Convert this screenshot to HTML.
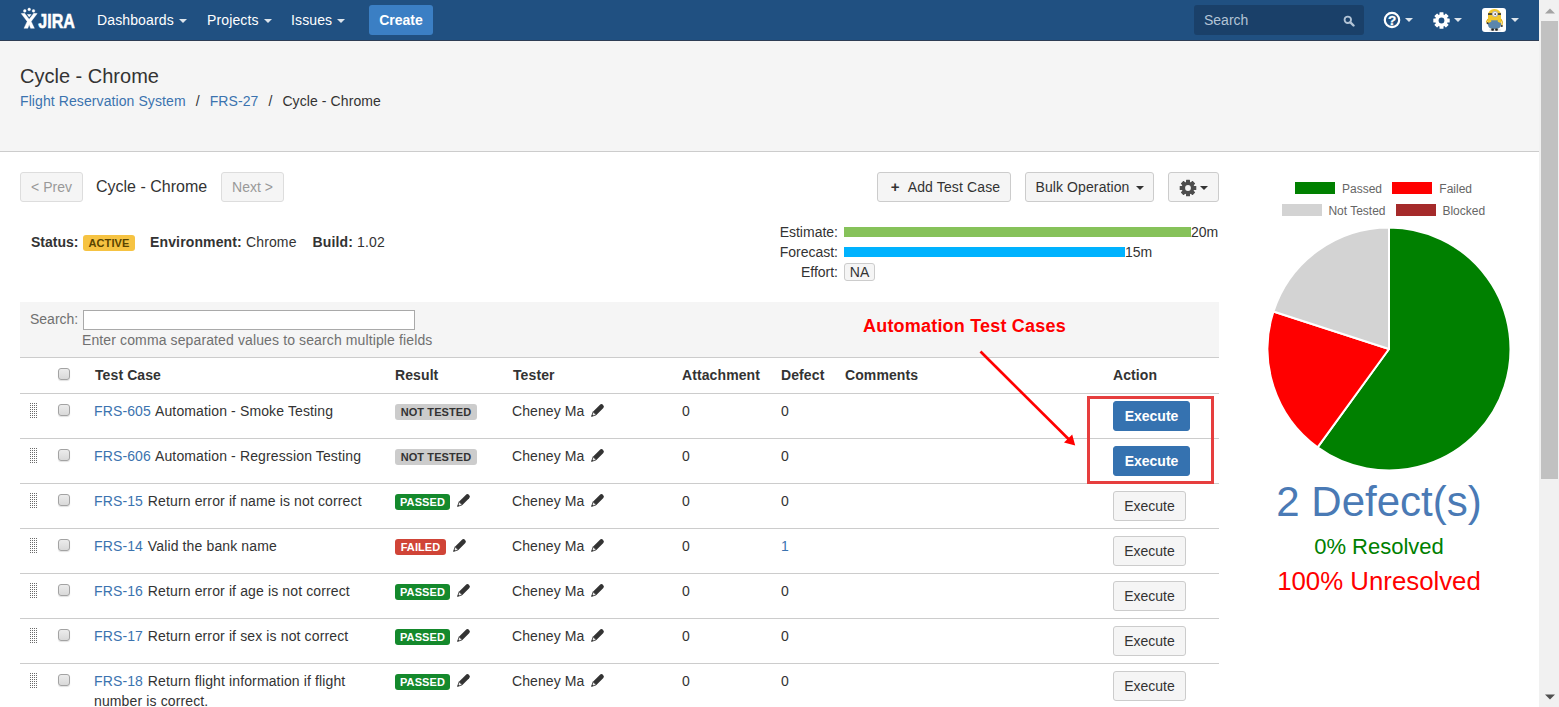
<!DOCTYPE html>
<html><head><meta charset="utf-8">
<style>
*{box-sizing:border-box;margin:0;padding:0}
html,body{width:1559px;height:707px;overflow:hidden;background:#fff}
body{font-family:"Liberation Sans",Arial,sans-serif;font-size:14px;color:#333;position:relative}
.abs{position:absolute;white-space:nowrap}
a{color:#3b73af;text-decoration:none}
#hdr{position:absolute;left:0;top:0;width:1539px;height:41px;background:#205081;border-bottom:1px solid #2e3d54}
#hdr .nav{position:absolute;top:12px;color:#fff;font-size:14px;line-height:16px;white-space:nowrap;letter-spacing:.13px}
.caret{display:inline-block;width:0;height:0;border-left:4px solid transparent;border-right:4px solid transparent;border-top:4px solid currentColor;vertical-align:middle;margin-left:5px;opacity:.85}
#create{position:absolute;left:369px;top:5px;width:64px;height:30px;background:#3b7fc4;border-radius:3px;color:#fff;font-weight:bold;font-size:14px;line-height:30px;text-align:center}
#qs{position:absolute;left:1194px;top:5px;width:170px;height:30px;background:#1a4069;border-radius:3px;color:#b3c4d6;font-size:14px;line-height:31px;padding-left:10px}
#phead{position:absolute;left:0;top:41px;width:1539px;height:111px;background:#f5f5f5;border-bottom:1px solid #ccc}
#sb{position:absolute;left:1539px;top:0;width:20px;height:707px;background:#f1f1f1}
#sb .thumb{position:absolute;left:2px;top:21px;width:17px;height:458px;background:#c1c1c1}
.btn{position:absolute;border:1px solid #ccc;border-radius:3px;background:#f5f5f5;color:#333;font-size:14px;text-align:center;white-space:nowrap}
.lbl{position:absolute;font-size:11px;font-weight:bold;color:#fff;border-radius:3px;height:16px;line-height:16px;text-align:center;letter-spacing:.1px;white-space:nowrap}
.row{position:absolute;left:20px;width:1199px;height:45px;background:linear-gradient(#ccc,#ccc) top/100% 1px no-repeat}
.row>*{position:absolute;white-space:nowrap}
.row a{margin-right:.8px}

.cb{width:12px;height:12px;border:1px solid #a3a3a3;border-radius:3px;background:linear-gradient(#ececec,#d9d9d9);box-shadow:0 1px 1px rgba(0,0,0,.12)}
.grip{width:7px;height:15px;background-image:linear-gradient(90deg,transparent 1px,#fff 1px),linear-gradient(#6a6a6a 1px,transparent 1px);background-size:2px 2px}
.pc{position:absolute}
.ex{height:30px;line-height:28px;border:1px solid #ccc;border-radius:3px;background:#f5f5f5;text-align:center;color:#333}
.ex.b{background:#3572b0;border-color:#3572b0;color:#fff;font-weight:bold}
.lg{font-size:12px;line-height:14px;color:#666}
</style></head><body>
<div id="hdr">
 <div class="nav" style="left:97px">Dashboards<span class="caret"></span></div>
 <div class="nav" style="left:207px">Projects<span class="caret"></span></div>
 <div class="nav" style="left:291px">Issues<span class="caret"></span></div>
 <div id="create">Create</div>
 <div id="qs">Search</div>

 <svg class="abs" style="left:20px;top:6px" width="58" height="26" viewBox="0 0 58 26">
  <g fill="#fff" stroke="#fff" stroke-width=".4" stroke-linejoin="round">
   <circle cx="4.8" cy="4.9" r="1.35"/><circle cx="9.2" cy="3.4" r="1.35"/><circle cx="13.5" cy="4.9" r="1.35"/>
   <path d="M1.2 7.6 L4.6 7.2 L9.2 13.2 L13.8 7.2 L17.2 7.6 L11.2 15.4 L14.4 22.3 L10.6 22.3 L9.2 18.6 L7.8 22.3 L4 22.3 L7.2 15.4 Z"/>
  </g>
  <path d="M6.9 8.2 L11.5 8.2 L9.2 11.2 Z" fill="#fff"/>
  <text x="18.3" y="22.3" font-family="Liberation Sans, sans-serif" font-weight="bold" font-size="20.5" fill="#fff" stroke="#fff" stroke-width=".55" textLength="36.6" lengthAdjust="spacingAndGlyphs">JIRA</text>
 </svg>
 <svg class="abs" style="left:1343px;top:15px" width="12" height="12" viewBox="0 0 13 13"><circle cx="5.2" cy="5.2" r="3.5" fill="none" stroke="#b3c4d6" stroke-width="2"/><path d="M8 8 L11.4 11.4" stroke="#b3c4d6" stroke-width="2.6" stroke-linecap="round"/></svg>
 <svg class="abs" style="left:1383px;top:11px" width="18" height="18" viewBox="0 0 18 18"><circle cx="9" cy="9" r="7.2" fill="none" stroke="#fff" stroke-width="2.2"/><text x="9" y="13.9" text-anchor="middle" font-family="Liberation Sans, sans-serif" font-weight="bold" font-size="13.5" fill="#fff" stroke="#fff" stroke-width=".3">?</text></svg>
 <div class="nav" style="left:1400px;top:11px"><span class="caret"></span></div>
 <svg class="abs" style="left:1432.5px;top:11.5px" width="17" height="17" viewBox="-8.5 -8.5 17 17"><g fill="#fff"><circle r="6.2"/><rect x="-2" y="-8.2" width="4" height="16.4" rx=".5" transform="rotate(0)"/><rect x="-2" y="-8.2" width="4" height="16.4" rx=".5" transform="rotate(45)"/><rect x="-2" y="-8.2" width="4" height="16.4" rx=".5" transform="rotate(90)"/><rect x="-2" y="-8.2" width="4" height="16.4" rx=".5" transform="rotate(135)"/></g><circle r="2.9" fill="#205081"/></svg>
 <div class="nav" style="left:1449px;top:11px"><span class="caret"></span></div>
 <div class="abs" style="left:1482px;top:8px;width:24px;height:24px;border-radius:3px;background:#fff;overflow:hidden">
  <svg width="24" height="24" viewBox="0 0 24 24"><ellipse cx="13" cy="22" rx="6" ry="1" fill="#ddd"/><rect x="6" y="1" width="13" height="20" rx="6.2" fill="#f2c72c"/><path d="M6 15.2 L8.7 14 L16.3 14 L19 15.2 L19 16.5 Q19 21 12.5 21 Q6 21 6 16.5 Z" fill="#5b86ad"/><rect x="9.2" y="12.3" width="6.6" height="3" fill="#5b86ad"/><rect x="6" y="5.2" width="13" height="1.7" fill="#3a3a3a"/><circle cx="13" cy="6" r="3.1" fill="#b9b9b9"/><circle cx="13" cy="6" r="2" fill="#fff"/><circle cx="13.2" cy="6.1" r=".95" fill="#5a3a22"/><path d="M6 11 L4.6 13.6 L5.6 15" stroke="#e0b21f" stroke-width="1.3" fill="none"/><circle cx="5.6" cy="15.2" r="1" fill="#333"/><path d="M19 11 L20.3 14 L19.8 17.5" stroke="#e0b21f" stroke-width="1.3" fill="none"/><circle cx="19.8" cy="18" r="1" fill="#333"/><rect x="9.3" y="20.5" width="2.6" height="2.2" rx=".6" fill="#222"/><rect x="13.2" y="20.5" width="2.6" height="2.2" rx=".6" fill="#222"/></svg>
 </div>
 <div class="nav" style="left:1505.5px;top:11px"><span class="caret"></span></div>
</div>
<div id="phead">
 <div class="abs" style="left:20px;top:23px;font-size:20px;line-height:24px">Cycle - Chrome</div>
 <div class="abs" style="left:20px;top:52px;font-size:14px;line-height:16px;letter-spacing:.09px"><a>Flight Reservation System</a><span style="padding:0 10px">/</span><a>FRS-27</a><span style="padding:0 10px">/</span>Cycle - Chrome</div>
</div>

<div id="main">
 <div class="btn" style="left:20px;top:172px;width:63px;height:30px;line-height:28px;color:#999;border-color:#ddd">&lt; Prev</div>
 <div class="abs" style="left:96px;top:177px;font-size:16px;line-height:20px">Cycle - Chrome</div>
 <div class="btn" style="left:221px;top:172px;width:63px;height:30px;line-height:28px;color:#999;border-color:#ddd">Next &gt;</div>
 <div class="btn" style="left:877px;top:172px;width:134px;height:30px;line-height:28px;padding-left:3px"><span style="letter-spacing:.14px"><b style="font-size:15px">+</b>&nbsp;&nbsp;Add Test Case</span></div>
 <div class="btn" style="left:1025px;top:172px;width:129px;height:30px;line-height:28px;letter-spacing:.1px">Bulk Operation<span class="caret" style="opacity:1;margin-left:6px"></span></div>
 <div class="btn" style="left:1168px;top:172px;width:51px;height:30px;line-height:28px">
  <svg style="position:absolute;left:9.5px;top:5.5px" width="18" height="18" viewBox="-9 -9 18 18"><g fill="#4d4d4d"><circle r="6.3"/><rect x="-2" y="-8.3" width="4" height="16.6" rx=".5" transform="rotate(0)"/><rect x="-2" y="-8.3" width="4" height="16.6" rx=".5" transform="rotate(45)"/><rect x="-2" y="-8.3" width="4" height="16.6" rx=".5" transform="rotate(90)"/><rect x="-2" y="-8.3" width="4" height="16.6" rx=".5" transform="rotate(135)"/></g><circle r="2.9" fill="#f5f5f5"/></svg>
  <span class="caret" style="position:absolute;left:26px;top:13px;opacity:1"></span>
 </div>

 <div class="abs" style="left:31px;top:234px;line-height:16px"><b>Status:</b></div>
 <div class="lbl" style="left:83px;top:235px;width:52px;background:#f6c342;color:#594300">ACTIVE</div>
 <div class="abs" style="left:150px;top:234px;line-height:16px;letter-spacing:.14px"><b>Environment:</b> Chrome</div>
 <div class="abs" style="left:312.5px;top:234px;line-height:16px;letter-spacing:.14px"><b>Build:</b> 1.02</div>

 <div class="abs" style="left:740px;width:98px;top:224px;line-height:16px;text-align:right">Estimate:</div>
 <div class="abs" style="left:844px;top:227px;width:347px;height:10px;background:#86c25a"></div>
 <div class="abs" style="left:1191px;top:224px;line-height:16px">20m</div>
 <div class="abs" style="left:740px;width:98px;top:244px;line-height:16px;text-align:right">Forecast:</div>
 <div class="abs" style="left:844px;top:247px;width:281px;height:10px;background:#00b2fe"></div>
 <div class="abs" style="left:1125px;top:244px;line-height:16px">15m</div>
 <div class="abs" style="left:740px;width:98px;top:264px;line-height:16px;text-align:right">Effort:</div>
 <div class="btn" style="left:844px;top:263px;width:31px;height:18px;line-height:16px;padding:0">NA</div>

 <div class="abs" style="left:20px;top:302px;width:1199px;height:56px;background:#f5f5f5;border-bottom:1px solid #ccc"></div>
 <div class="abs" style="left:30px;top:311px;line-height:16px;color:#707070">Search:</div>
 <div class="abs" style="left:83px;top:310px;width:332px;height:20px;background:#fff;border:1px solid #a9a9a9"></div>
 <div class="abs" style="left:82px;top:332px;line-height:16px;color:#707070;letter-spacing:.12px">Enter comma separated values to search multiple fields</div>
 <div class="abs" style="left:863px;top:316px;line-height:20px;font-size:18px;font-weight:bold;color:#f00;letter-spacing:.2px">Automation Test Cases</div>
<div class="row" style="top:357px;height:36px;background:none;font-weight:bold;letter-spacing:.1px"><span class="cb" style="left:38px;top:11px"></span><span style="left:75px;top:10px">Test Case</span><span style="left:375px;top:10px">Result</span><span style="left:493px;top:10px">Tester</span><span style="left:662px;top:10px">Attachment</span><span style="left:761px;top:10px">Defect</span><span style="left:825px;top:10px">Comments</span><span style="left:1093px;top:10px">Action</span></div>
<div class="row" style="top:393px"><span class="grip" style="left:10px;top:10px"></span><span class="cb" style="left:38px;top:11px"></span><span style="left:74px;top:10px;line-height:16px;letter-spacing:.13px"><a>FRS-605</a> Automation - Smoke Testing</span><span class="lbl" style="left:375px;top:11px;width:82px;background:#ccc;color:#333">NOT TESTED</span><span style="left:492px;top:10px;line-height:16px;letter-spacing:.09px">Cheney Ma</span><svg class="pc" style="left:571px;top:10px" width="14" height="14" viewBox="0 0 14 14"><g transform="translate(6.4 7.6) rotate(45) scale(1.14)"><path d="M-2.1 -5 a2.1 2.1 0 0 1 4.2 0 L2.1 3.4 L-2.1 3.4 Z" fill="#333"/><path d="M-1.9 3.4 L1.9 3.4 L0 7.2 Z" fill="#eee" stroke="#333" stroke-width=".7"/><path d="M-.8 5.7 L.8 5.7 L0 7.4 Z" fill="#333"/></g></svg><span style="left:662px;top:10px;line-height:16px">0</span><span style="left:761px;top:10px;line-height:16px">0</span><span class="ex b" style="left:1093px;top:8px;width:77px">Execute</span></div>
<div class="row" style="top:438px"><span class="grip" style="left:10px;top:10px"></span><span class="cb" style="left:38px;top:11px"></span><span style="left:74px;top:10px;line-height:16px;letter-spacing:.13px"><a>FRS-606</a> Automation - Regression Testing</span><span class="lbl" style="left:375px;top:11px;width:82px;background:#ccc;color:#333">NOT TESTED</span><span style="left:492px;top:10px;line-height:16px;letter-spacing:.09px">Cheney Ma</span><svg class="pc" style="left:571px;top:10px" width="14" height="14" viewBox="0 0 14 14"><g transform="translate(6.4 7.6) rotate(45) scale(1.14)"><path d="M-2.1 -5 a2.1 2.1 0 0 1 4.2 0 L2.1 3.4 L-2.1 3.4 Z" fill="#333"/><path d="M-1.9 3.4 L1.9 3.4 L0 7.2 Z" fill="#eee" stroke="#333" stroke-width=".7"/><path d="M-.8 5.7 L.8 5.7 L0 7.4 Z" fill="#333"/></g></svg><span style="left:662px;top:10px;line-height:16px">0</span><span style="left:761px;top:10px;line-height:16px">0</span><span class="ex b" style="left:1093px;top:8px;width:77px">Execute</span></div>
<div class="row" style="top:483px"><span class="grip" style="left:10px;top:10px"></span><span class="cb" style="left:38px;top:11px"></span><span style="left:74px;top:10px;line-height:16px;letter-spacing:.13px"><a>FRS-15</a> Return error if name is not correct</span><span class="lbl" style="left:375px;top:11px;width:55px;background:#14892c">PASSED</span><svg class="pc" style="left:437px;top:10px" width="14" height="14" viewBox="0 0 14 14"><g transform="translate(6.4 7.6) rotate(45) scale(1.14)"><path d="M-2.1 -5 a2.1 2.1 0 0 1 4.2 0 L2.1 3.4 L-2.1 3.4 Z" fill="#333"/><path d="M-1.9 3.4 L1.9 3.4 L0 7.2 Z" fill="#eee" stroke="#333" stroke-width=".7"/><path d="M-.8 5.7 L.8 5.7 L0 7.4 Z" fill="#333"/></g></svg><span style="left:492px;top:10px;line-height:16px;letter-spacing:.09px">Cheney Ma</span><svg class="pc" style="left:571px;top:10px" width="14" height="14" viewBox="0 0 14 14"><g transform="translate(6.4 7.6) rotate(45) scale(1.14)"><path d="M-2.1 -5 a2.1 2.1 0 0 1 4.2 0 L2.1 3.4 L-2.1 3.4 Z" fill="#333"/><path d="M-1.9 3.4 L1.9 3.4 L0 7.2 Z" fill="#eee" stroke="#333" stroke-width=".7"/><path d="M-.8 5.7 L.8 5.7 L0 7.4 Z" fill="#333"/></g></svg><span style="left:662px;top:10px;line-height:16px">0</span><span style="left:761px;top:10px;line-height:16px">0</span><span class="ex" style="left:1093px;top:8px;width:73px">Execute</span></div>
<div class="row" style="top:528px"><span class="grip" style="left:10px;top:10px"></span><span class="cb" style="left:38px;top:11px"></span><span style="left:74px;top:10px;line-height:16px;letter-spacing:.13px"><a>FRS-14</a> Valid the bank name</span><span class="lbl" style="left:375px;top:11px;width:51px;background:#d04437">FAILED</span><svg class="pc" style="left:433px;top:10px" width="14" height="14" viewBox="0 0 14 14"><g transform="translate(6.4 7.6) rotate(45) scale(1.14)"><path d="M-2.1 -5 a2.1 2.1 0 0 1 4.2 0 L2.1 3.4 L-2.1 3.4 Z" fill="#333"/><path d="M-1.9 3.4 L1.9 3.4 L0 7.2 Z" fill="#eee" stroke="#333" stroke-width=".7"/><path d="M-.8 5.7 L.8 5.7 L0 7.4 Z" fill="#333"/></g></svg><span style="left:492px;top:10px;line-height:16px;letter-spacing:.09px">Cheney Ma</span><svg class="pc" style="left:571px;top:10px" width="14" height="14" viewBox="0 0 14 14"><g transform="translate(6.4 7.6) rotate(45) scale(1.14)"><path d="M-2.1 -5 a2.1 2.1 0 0 1 4.2 0 L2.1 3.4 L-2.1 3.4 Z" fill="#333"/><path d="M-1.9 3.4 L1.9 3.4 L0 7.2 Z" fill="#eee" stroke="#333" stroke-width=".7"/><path d="M-.8 5.7 L.8 5.7 L0 7.4 Z" fill="#333"/></g></svg><span style="left:662px;top:10px;line-height:16px">0</span><span style="left:761px;top:10px;line-height:16px"><a>1</a></span><span class="ex" style="left:1093px;top:8px;width:73px">Execute</span></div>
<div class="row" style="top:573px"><span class="grip" style="left:10px;top:10px"></span><span class="cb" style="left:38px;top:11px"></span><span style="left:74px;top:10px;line-height:16px;letter-spacing:.13px"><a>FRS-16</a> Return error if age is not correct</span><span class="lbl" style="left:375px;top:11px;width:55px;background:#14892c">PASSED</span><svg class="pc" style="left:437px;top:10px" width="14" height="14" viewBox="0 0 14 14"><g transform="translate(6.4 7.6) rotate(45) scale(1.14)"><path d="M-2.1 -5 a2.1 2.1 0 0 1 4.2 0 L2.1 3.4 L-2.1 3.4 Z" fill="#333"/><path d="M-1.9 3.4 L1.9 3.4 L0 7.2 Z" fill="#eee" stroke="#333" stroke-width=".7"/><path d="M-.8 5.7 L.8 5.7 L0 7.4 Z" fill="#333"/></g></svg><span style="left:492px;top:10px;line-height:16px;letter-spacing:.09px">Cheney Ma</span><svg class="pc" style="left:571px;top:10px" width="14" height="14" viewBox="0 0 14 14"><g transform="translate(6.4 7.6) rotate(45) scale(1.14)"><path d="M-2.1 -5 a2.1 2.1 0 0 1 4.2 0 L2.1 3.4 L-2.1 3.4 Z" fill="#333"/><path d="M-1.9 3.4 L1.9 3.4 L0 7.2 Z" fill="#eee" stroke="#333" stroke-width=".7"/><path d="M-.8 5.7 L.8 5.7 L0 7.4 Z" fill="#333"/></g></svg><span style="left:662px;top:10px;line-height:16px">0</span><span style="left:761px;top:10px;line-height:16px">0</span><span class="ex" style="left:1093px;top:8px;width:73px">Execute</span></div>
<div class="row" style="top:618px"><span class="grip" style="left:10px;top:10px"></span><span class="cb" style="left:38px;top:11px"></span><span style="left:74px;top:10px;line-height:16px;letter-spacing:.13px"><a>FRS-17</a> Return error if sex is not correct</span><span class="lbl" style="left:375px;top:11px;width:55px;background:#14892c">PASSED</span><svg class="pc" style="left:437px;top:10px" width="14" height="14" viewBox="0 0 14 14"><g transform="translate(6.4 7.6) rotate(45) scale(1.14)"><path d="M-2.1 -5 a2.1 2.1 0 0 1 4.2 0 L2.1 3.4 L-2.1 3.4 Z" fill="#333"/><path d="M-1.9 3.4 L1.9 3.4 L0 7.2 Z" fill="#eee" stroke="#333" stroke-width=".7"/><path d="M-.8 5.7 L.8 5.7 L0 7.4 Z" fill="#333"/></g></svg><span style="left:492px;top:10px;line-height:16px;letter-spacing:.09px">Cheney Ma</span><svg class="pc" style="left:571px;top:10px" width="14" height="14" viewBox="0 0 14 14"><g transform="translate(6.4 7.6) rotate(45) scale(1.14)"><path d="M-2.1 -5 a2.1 2.1 0 0 1 4.2 0 L2.1 3.4 L-2.1 3.4 Z" fill="#333"/><path d="M-1.9 3.4 L1.9 3.4 L0 7.2 Z" fill="#eee" stroke="#333" stroke-width=".7"/><path d="M-.8 5.7 L.8 5.7 L0 7.4 Z" fill="#333"/></g></svg><span style="left:662px;top:10px;line-height:16px">0</span><span style="left:761px;top:10px;line-height:16px">0</span><span class="ex" style="left:1093px;top:8px;width:73px">Execute</span></div>
<div class="row" style="top:663px"><span class="grip" style="left:10px;top:10px"></span><span class="cb" style="left:38px;top:11px"></span><span style="left:74px;top:8px;line-height:20px;letter-spacing:.13px"><a>FRS-18</a> Return flight information if flight<br>number is correct.</span><span class="lbl" style="left:375px;top:11px;width:55px;background:#14892c">PASSED</span><svg class="pc" style="left:437px;top:10px" width="14" height="14" viewBox="0 0 14 14"><g transform="translate(6.4 7.6) rotate(45) scale(1.14)"><path d="M-2.1 -5 a2.1 2.1 0 0 1 4.2 0 L2.1 3.4 L-2.1 3.4 Z" fill="#333"/><path d="M-1.9 3.4 L1.9 3.4 L0 7.2 Z" fill="#eee" stroke="#333" stroke-width=".7"/><path d="M-.8 5.7 L.8 5.7 L0 7.4 Z" fill="#333"/></g></svg><span style="left:492px;top:10px;line-height:16px;letter-spacing:.09px">Cheney Ma</span><svg class="pc" style="left:571px;top:10px" width="14" height="14" viewBox="0 0 14 14"><g transform="translate(6.4 7.6) rotate(45) scale(1.14)"><path d="M-2.1 -5 a2.1 2.1 0 0 1 4.2 0 L2.1 3.4 L-2.1 3.4 Z" fill="#333"/><path d="M-1.9 3.4 L1.9 3.4 L0 7.2 Z" fill="#eee" stroke="#333" stroke-width=".7"/><path d="M-.8 5.7 L.8 5.7 L0 7.4 Z" fill="#333"/></g></svg><span style="left:662px;top:10px;line-height:16px">0</span><span style="left:761px;top:10px;line-height:16px">0</span><span class="ex" style="left:1093px;top:8px;width:73px">Execute</span></div>
 <svg class="abs" style="left:1085px;top:394px" width="132" height="92" viewBox="1085 394 132 92"><rect x="1088.5" y="397.5" width="124" height="85" fill="none" stroke="#e63e3e" stroke-width="3"/></svg>
 <svg class="abs" style="left:970px;top:345px" width="115" height="110" viewBox="970 345 115 110"><path d="M980.5 351.5 L1069.5 440" stroke="#f00" stroke-width="2.7"/><path d="M1075.2 445.6 L1064 442.6 L1072.2 434.6 Z" fill="#f00"/></svg>

 <div class="abs" style="left:1295px;top:182px;width:40px;height:12px;background:#008000"></div><div class="abs lg" style="left:1342px;top:182px">Passed</div>
 <div class="abs" style="left:1392px;top:182px;width:40px;height:12px;background:#ff0000"></div><div class="abs lg" style="left:1439.3px;top:182px">Failed</div>
 <div class="abs" style="left:1282px;top:204px;width:40px;height:12px;background:#d3d3d3"></div><div class="abs lg" style="left:1328.4px;top:204px">Not Tested</div>
 <div class="abs" style="left:1396px;top:204px;width:40px;height:12px;background:#a52a2a"></div><div class="abs lg" style="left:1442.4px;top:204px">Blocked</div>
 <svg class="abs" style="left:1258.9px;top:219px" width="260" height="260" viewBox="-130 -130 260 260">
  <g stroke="#fff" stroke-width="2" stroke-linejoin="round">
  <path d="M0 0 L0 -121.5 A121.5 121.5 0 1 1 -71.42 98.3 Z" fill="#008000"/>
  <path d="M0 0 L-71.42 98.3 A121.5 121.5 0 0 1 -115.55 -37.55 Z" fill="#ff0000"/>
  <path d="M0 0 L-115.55 -37.55 A121.5 121.5 0 0 1 0 -121.5 Z" fill="#d3d3d3"/>
  </g>
 </svg>
 <div class="abs" style="left:1259px;width:240px;top:478px;text-align:center;font-size:42px;line-height:48px;color:#4a7ab5">2 Defect(s)</div>
 <div class="abs" style="left:1259px;width:240px;top:533px;text-align:center;font-size:22px;line-height:28px;color:#008000">0% Resolved</div>
 <div class="abs" style="left:1259px;width:240px;top:566px;text-align:center;font-size:25.8px;line-height:30px;color:#ff0000">100% Unresolved</div>

</div>
<div id="sb"><div class="thumb"></div><svg style="position:absolute;left:6px;top:8px" width="10" height="6"><path d="M0 5.5 L5 0.5 L10 5.5Z" fill="#a3a3a3"/></svg><svg style="position:absolute;left:6px;top:694px" width="10" height="6"><path d="M0 0.5 L5 5.5 L10 0.5Z" fill="#505050"/></svg></div>
</body></html>
